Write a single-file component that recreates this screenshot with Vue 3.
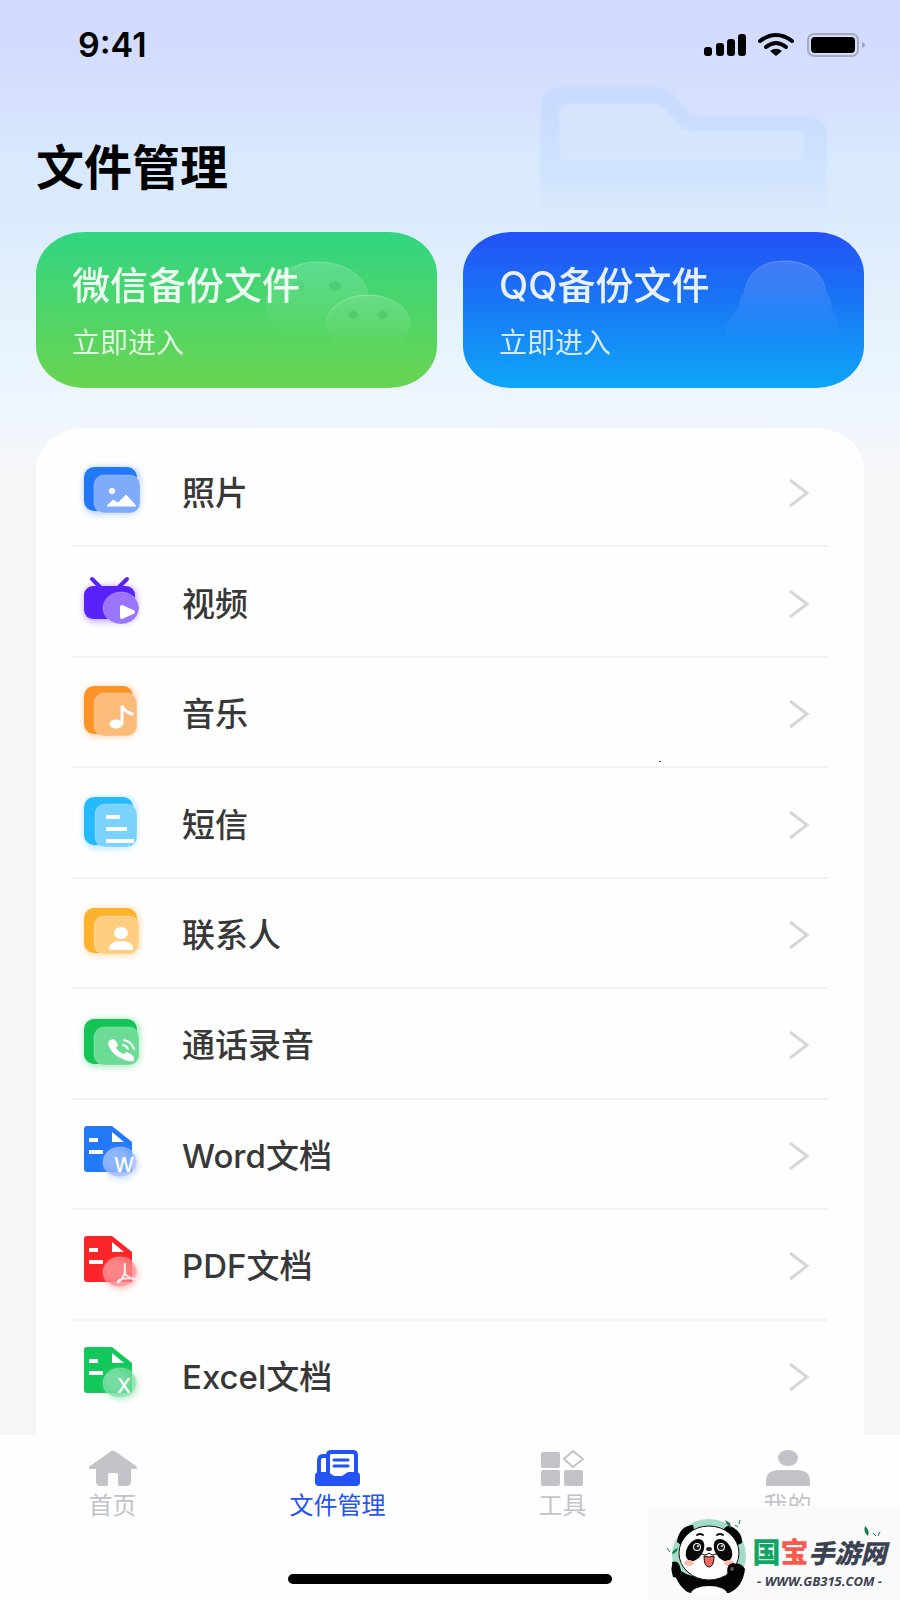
<script setup>
import { ref } from 'vue'

const files = [
  { id: 'photo', name: '照片', color: '#2279f8', front: '#7eabfa' },
  { id: 'video', name: '视频', color: '#5a22fb', front: '#9a74fb' },
  { id: 'music', name: '音乐', color: '#fb9327', front: '#fdbb7a' },
  { id: 'sms', name: '短信', color: '#25b9fd', front: '#7ad3fd' },
  { id: 'contact', name: '联系人', color: '#fdb22b', front: '#fdcd80' },
  { id: 'record', name: '通话录音', color: '#12c556', front: '#6cdb95' },
  { id: 'word', name: 'Word文档', color: '#2279f8', front: '#8fb6fb', letter: 'W' },
  { id: 'pdf', name: 'PDF文档', color: '#fb2429', front: '#fc8588' },
  { id: 'excel', name: 'Excel文档', color: '#12c85a', front: '#74dda0', letter: 'X' }
]

// back and front plates of the folder-like icons: x, y, width, height
const plates = {
  photo: { back: [8, 10, 53, 44], front: [18, 18, 46, 38] },
  music: { back: [8, 8, 49, 48], front: [18, 15, 43, 43] },
  sms: { back: [8, 8, 49, 48], front: [19, 15, 42, 43] },
  contact: { back: [8, 9, 53, 45], front: [18, 17, 45, 38] },
  record: { back: [8, 10, 53, 45], front: [18, 18, 45, 38] }
}

const tabs = [
  { id: 'home', name: '首页' },
  { id: 'files', name: '文件管理' },
  { id: 'tools', name: '工具' },
  { id: 'mine', name: '我的' }
]
const activeTab = ref('files')

const isDoc = (id) => ['word', 'pdf', 'excel'].includes(id)
</script>

<template>
  <div class="page">
    <svg class="folder_bg" viewBox="0 0 300 150" aria-hidden="true">
      <defs>
        <linearGradient id="folderFade" x1="0" y1="0" x2="0" y2="1">
          <stop offset="0" stop-color="#c8dafe" />
          <stop offset="0.6" stop-color="#cbe0fe" stop-opacity="0.7" />
          <stop offset="1" stop-color="#d8eafd" stop-opacity="0" />
        </linearGradient>
        <filter id="soft" x="-10%" y="-10%" width="120%" height="120%"><feGaussianBlur stdDeviation="1.5" /></filter>
      </defs>
      <path fill="url(#folderFade)" filter="url(#soft)" d="M0 150V28Q0 5 26 5H114Q128 5 138 17L150 30Q153 34 162 34H264Q287 34 287 54V150Z" />
      <path fill="#d8e7ff" filter="url(#soft)" opacity=".85" d="M20 78V28Q20 22 28 22H112Q122 22 128 31L137 42Q142 49 156 49H258Q264 49 264 55V78Z" />
    </svg>

    <header class="status">
      <span class="time">9:41</span>
      <svg class="status_icons" viewBox="0 0 162 26" aria-hidden="true">
        <rect x="0" y="15" width="8" height="9" rx="3" />
        <rect x="12" y="11" width="8" height="13" rx="3" />
        <rect x="23" y="7" width="8" height="17" rx="3" />
        <rect x="34" y="2" width="8" height="22" rx="3" />
        <path fill="none" stroke="#000" stroke-width="4" stroke-linecap="round" d="M56 9Q72 -3 88 9" />
        <path fill="none" stroke="#000" stroke-width="4" stroke-linecap="round" d="M62 15Q72 7 82 15" />
        <path d="M66 19Q72 14.500 78 19L72 24Z" />
        <rect x="104" y="2" width="50" height="22" rx="6" fill="#d5dcf4" stroke="#a3aac4" stroke-width="2" />
        <rect x="107" y="5" width="44" height="16" rx="4" />
        <path fill="#9fa7bf" d="M158 10Q161 11 161 13Q161 15 158 16Z" />
      </svg>
    </header>

    <h1 class="title">文件管理</h1>

    <section class="backups">
      <button class="backup wechat" type="button">
        <svg class="backup_art" viewBox="0 0 401 156" preserveAspectRatio="xMaxYMid meet" aria-hidden="true">
          <defs>
            <linearGradient id="artFade" x1="0" y1="0" x2="0" y2="1">
              <stop offset="0" stop-color="#fff" stop-opacity="0.17" />
              <stop offset="0.9" stop-color="#fff" stop-opacity="0" />
            </linearGradient>
            <linearGradient id="lineFade" x1="0" y1="0" x2="0" y2="1">
              <stop offset="0" stop-color="#fff" stop-opacity="0.25" />
              <stop offset="0.6" stop-color="#fff" stop-opacity="0" />
            </linearGradient>
          </defs>
          <path fill="url(#artFade)" stroke="url(#lineFade)" d="M281 30C310 30 329 44 332 63C309 65 292 74 290 94C288 105 292 110 296 113C258 121 230 100 230 73C230 49 253 30 281 30Z" />
          <ellipse cx="299" cy="54" rx="6" ry="5" fill="#34b863" opacity=".35" />
          <ellipse cx="263" cy="54" rx="6" ry="5" fill="#34b863" opacity=".2" />
          <ellipse cx="332" cy="92" rx="42" ry="29" fill="url(#artFade)" stroke="url(#lineFade)" />
          <ellipse cx="317" cy="83" rx="5" ry="4" fill="#3fba57" opacity=".4" />
          <ellipse cx="347" cy="83" rx="5" ry="4" fill="#3fba57" opacity=".4" />
        </svg>
        <span class="backup_name">微信备份文件</span>
        <span class="backup_go">立即进入</span>
      </button>
      <button class="backup qq" type="button">
        <svg class="backup_art" viewBox="0 0 401 156" preserveAspectRatio="xMaxYMid meet" aria-hidden="true">
          <path fill="url(#artFade)" stroke="url(#lineFade)" d="M322 29C348 29 362 44 363 62Q369 68 368 77Q377 89 377 99Q375 108 370 102C366 124 278 124 273 102Q264 110 262 99Q264 87 276 76Q276 68 281 62C284 42 297 29 322 29Z" />
        </svg>
        <span class="backup_name">QQ备份文件</span>
        <span class="backup_go">立即进入</span>
      </button>
    </section>

    <ul class="list">
      <li v-for="file in files" :key="file.id" class="row">
        <a class="row_link" href="#">
          <svg class="row_icon" viewBox="0 0 72 72" aria-hidden="true">
            <defs>
              <filter id="glow" x="-30%" y="-30%" width="160%" height="160%"><feGaussianBlur stdDeviation="3" /></filter>
              <radialGradient :id="'circle-' + file.id" cx=".35" cy=".4" r=".75">
                <stop offset="0.3" :stop-color="file.front" />
                <stop offset="1" :stop-color="file.front" stop-opacity="0.35" />
              </radialGradient>
            </defs>

            <template v-if="plates[file.id]">
              <rect :x="plates[file.id].back[0]" :y="plates[file.id].back[1]" :width="plates[file.id].back[2] + 3" :height="plates[file.id].back[3] + 3" rx="12" :fill="file.front" opacity=".6" filter="url(#glow)" />
              <rect :x="plates[file.id].back[0]" :y="plates[file.id].back[1]" :width="plates[file.id].back[2]" :height="plates[file.id].back[3]" rx="10" :fill="file.color" />
              <rect :x="plates[file.id].front[0]" :y="plates[file.id].front[1]" :width="plates[file.id].front[2]" :height="plates[file.id].front[3]" rx="10" :fill="file.front" stroke="#fff" stroke-opacity=".25" />
            </template>

            <g v-if="file.id === 'photo'" fill="#fff">
              <circle cx="36" cy="34" r="3" />
              <path d="M31 49L37 43L42 46L50 38L60 49Z" stroke="#fff" stroke-linejoin="round" />
            </g>

            <g v-else-if="file.id === 'video'">
              <rect x="8" y="18" width="53" height="36" rx="10" :fill="file.front" opacity=".6" filter="url(#glow)" />
              <path d="M16 11L24 19M51 11L43 19" :stroke="file.color" stroke-width="4" stroke-linecap="round" />
              <rect x="8" y="18" width="51" height="33" rx="9" :fill="file.color" />
              <ellipse cx="45" cy="40" rx="18" ry="16" :fill="file.front" stroke="#fff" stroke-opacity=".25" />
              <path d="M46 39L57 44L46 49Z" fill="#fff" stroke="#fff" stroke-width="4" stroke-linejoin="round" />
            </g>

            <g v-else-if="file.id === 'music'" fill="none" stroke="#fff" stroke-width="3" stroke-linecap="round">
              <path d="M46 46V28Q49 34 56 36" />
              <ellipse cx="40" cy="46" rx="5" ry="3" fill="#fff" />
            </g>

            <path v-else-if="file.id === 'sms'" d="M30 28H44M30 40H51M30 52H58" stroke="#fff" stroke-width="4" />

            <g v-else-if="file.id === 'contact'" fill="#fff">
              <ellipse cx="45" cy="34" rx="7" ry="6" />
              <path d="M33 51V49Q34 42 45 42Q56 42 57 49V51Z" />
            </g>

            <g v-else-if="file.id === 'record'" fill="#fff">
              <path d="M34 31L38 30Q41 33 42 36L40 39Q43 43 47 45L51 43Q56 45 58 48L58 52Q54 53 49 51Q35 46 32 35Q32 32 34 31Z" />
              <path d="M47 36Q51 37 52 40M48 31Q56 33 58 40" fill="none" stroke="#fff" stroke-width="2" stroke-linecap="round" />
            </g>

            <g v-else-if="isDoc(file.id)">
              <path d="M11 6H36L56 22V52H11Q8 52 8 49V9Q8 6 11 6Z" :fill="file.color" />
              <path d="M36 12L48 22H36Z" fill="#fff" />
              <path d="M13 20H22M13 32H27" stroke="#fff" stroke-width="4" />
              <ellipse cx="45" cy="44" rx="17" ry="15" :fill="file.front" opacity=".5" filter="url(#glow)" />
              <ellipse cx="44" cy="42" rx="17" ry="15" :fill="'url(#circle-' + file.id + ')'" stroke="#fff" stroke-opacity=".25" />
              <text v-if="file.letter" class="icon_letter" x="48" y="52" text-anchor="middle">{{ file.letter }}</text>
              <path v-else d="M49 34Q48 42 50 45Q55 49 60 49M49 38Q50 44 44 51Q41 54 42 51Q47 47 60 49" fill="none" stroke="#fff" stroke-width="2" stroke-linecap="round" opacity=".85" />
            </g>
          </svg>
          <span class="row_name">{{ file.name }}</span>
          <svg class="row_arrow" viewBox="0 0 22 30" aria-hidden="true">
            <path d="M2 2L19 15L2 28" />
          </svg>
        </a>
      </li>
    </ul>

    <nav class="tabbar">
      <div class="tabs">
        <a
          v-for="tab in tabs"
          :key="tab.id"
          href="#"
          :class="activeTab === tab.id ? 'tab tab_active' : 'tab'"
          @click.prevent="activeTab = tab.id"
        >
          <svg class="tab_icon" viewBox="0 0 48 40" aria-hidden="true">
            <path v-if="tab.id === 'home'" d="M21 4Q24 1 27 4L47 18Q50 21 46 21H42V34Q42 38 37 38H30Q29 38 29 36V27Q29 25 27 25H21Q19 25 19 27V36Q19 38 18 38H12Q7 38 7 34V21H2Q-2 21 1 18Z" />
            <g v-else-if="tab.id === 'files'">
              <path fill="none" stroke="currentColor" stroke-width="4" d="M14 26V7Q14 4 17 4H39Q42 4 42 7V26M13 8H9Q5 8 5 13V26" />
              <path d="M5 24H14L20 28H28L34 24H42Q46 24 46 28V34Q46 38 42 38H5Q1 38 1 34V28Q1 24 5 24Z" />
              <path fill="none" stroke="currentColor" stroke-width="3" stroke-linecap="round" d="M20 12H34M20 18H34" />
            </g>
            <g v-else-if="tab.id === 'tools'">
              <rect x="2" y="4" width="19" height="16" rx="2" />
              <rect x="2" y="22" width="19" height="16" rx="2" />
              <rect x="25" y="22" width="19" height="16" rx="2" />
              <path fill="none" stroke="currentColor" stroke-width="2" stroke-linejoin="round" d="M34 3L44 11L34 19L25 11Z" />
            </g>
            <g v-else>
              <ellipse cx="24" cy="10" rx="10" ry="8" />
              <path d="M2 38V32Q3 22 15 22H33Q45 22 46 32V38Z" />
            </g>
          </svg>
          <span class="tab_name">{{ tab.name }}</span>
        </a>
      </div>
      <div class="indicator"></div>
    </nav>

    <span class="speck"></span>

    <aside class="brand">
      <svg class="brand_panda" viewBox="0 0 84 80" aria-hidden="true">
        <defs>
          <clipPath id="pandaClip"><path d="M0 0H84V66Q78 74 66 76H24Q12 74 4 66Z" /></clipPath>
        </defs>
        <circle cx="42" cy="39" r="37" fill="#a5dcc6" />
        <g clip-path="url(#pandaClip)">
          <path d="M5 45Q12 42 14 54Q26 62 42 60Q58 62 62 56Q58 46 67 46Q75 46 78 52Q76 70 62 76H22Q8 68 5 45Z" fill="#050505" />
          <ellipse cx="42" cy="77" rx="18" ry="8" fill="#fff" />
        </g>
        <path d="M10 25Q12 9 26 8L28 16L14 28Z" fill="#050505" />
        <path d="M56 14Q59 6 67 11Q76 17 75 26L69 29Z" fill="#050505" />
        <ellipse cx="42" cy="36" rx="30" ry="27" fill="#fff" stroke="#111" stroke-width="1" />
        <ellipse cx="28" cy="33" rx="8" ry="12" transform="rotate(32 28 33)" fill="#080808" />
        <ellipse cx="56" cy="33" rx="8" ry="12" transform="rotate(-32 56 33)" fill="#080808" />
        <circle cx="30" cy="30" r="4" fill="#fff" />
        <circle cx="54" cy="30" r="4" fill="#fff" />
        <circle cx="30" cy="30" r="3" fill="#221c1c" />
        <circle cx="54" cy="30" r="3" fill="#221c1c" />
        <circle cx="31" cy="29" r="1" fill="#fff" />
        <circle cx="55" cy="29" r="1" fill="#fff" />
        <path d="M30 18Q33 16 36 18M50 18Q53 16 56 18" fill="none" stroke="#111" stroke-width="2" stroke-linecap="round" />
        <ellipse cx="42" cy="32" rx="3" ry="2" fill="#3a2020" />
        <path d="M34 36Q38 40 42 36Q46 40 50 36" fill="none" stroke="#111" stroke-width="1" />
        <path d="M37 39Q42 41 47 39Q47 50 42 50Q37 50 37 39Z" fill="#f0685e" stroke="#111" stroke-width="1" />
        <ellipse cx="22" cy="46" rx="5" ry="3" fill="#fbbcab" />
        <ellipse cx="62" cy="46" rx="5" ry="3" fill="#fbbcab" />
        <path d="M6 60Q3 50 6 46Q12 43 13 51L16 62ZM61 60Q58 47 66 46Q76 47 76 56L66 66Z" fill="#050505" />
        <circle cx="65" cy="52" r="2" fill="#5d5050" />
        <path d="M58 3L63 6L64 11Q59 8 58 3ZM5 37Q5 33 11 31Q10 36 5 37Z" fill="#187b50" />
        <path d="M68 8L71 10M72 7L73 3M0 31L3 35" stroke="#187b50" />
      </svg>
      <div class="brand_text">
        <p class="brand_name"><span class="brand_big brand_green">国</span><span class="brand_big brand_red">宝</span>手游网</p>
        <p class="brand_url">- WWW.GB315.COM -</p>
      </div>
      <svg class="brand_leaf" viewBox="0 0 20 16" aria-hidden="true">
        <path d="M3 2Q8 6 6 12Q1 8 3 2Z" fill="#187b50" />
        <path d="M11 9L14 12M16 12L18 8" stroke="#187b50" />
      </svg>
    </aside>
  </div>
</template>

<style>
body {
  background: #f6f6f6;
}
</style>

<style scoped>
.page {
  position: relative;
  display: flex;
  flex-direction: column;
  min-height: 100vh;
  overflow: hidden;
  color: #000;
  font-family: Inter, "Noto Sans CJK SC", sans-serif;
  background: linear-gradient(#d2d9fe 0, #d5e1fe 110px, #d8e8fe 150px, #dcebfc 220px, #e6f3fd 330px, #f0f6fe 420px, #f6f6f6 480px);
}

.folder_bg {
  position: absolute;
  top: 82px;
  right: 60px;
  width: 300px;
  height: 150px;
}

.status {
  display: flex;
  align-items: center;
  justify-content: space-between;
  height: 90px;
  padding: 0 34px 0 78px;
}

.time {
  font-size: 34px;
  font-weight: 600;
  line-height: 40px;
}

.status_icons {
  width: 162px;
  height: 26px;
}

.title {
  position: relative;
  margin: 48px 36px 0;
  font-size: 48px;
  font-weight: 700;
  line-height: 60px;
}

.backups {
  position: relative;
  display: grid;
  grid-template-columns: 1fr 1fr;
  gap: 26px;
  margin: 34px 36px 0;
}

.backup {
  position: relative;
  display: flex;
  flex-direction: column;
  align-items: flex-start;
  gap: 16px;
  height: 156px;
  padding: 29px 36px;
  border: 0;
  border-radius: 48px / 42px;
  color: #fff;
  font-family: inherit;
  text-align: left;
}

.wechat {
  background: linear-gradient(#32d583, #69d550);
}

.qq {
  background: linear-gradient(#2350f5, #0ea6f6);
}

.backup_art {
  position: absolute;
  inset: 0;
  width: 100%;
  height: 100%;
}

.backup_name {
  position: relative;
  font-size: 38px;
  font-weight: 500;
  line-height: 48px;
  opacity: .9;
}

.backup_go {
  position: relative;
  font-size: 28px;
  line-height: 36px;
  opacity: .82;
}

.list {
  position: relative;
  display: flex;
  flex: 1;
  flex-direction: column;
  margin: 40px 36px 0;
  padding: 9px 36px 4px;
  border-radius: 48px 48px 0 0 / 42px 42px 0 0;
  list-style: none;
  background: #fefefe;
}

.row {
  display: flex;
  flex: 1;
  border-bottom: 2px solid #f2f2f2;
}

.row:last-child {
  border-bottom-color: transparent;
}

.row_link {
  display: flex;
  flex: 1;
  align-items: center;
  padding: 4px 18px 0 4px;
  color: #383838;
  text-decoration: none;
}

.row_icon {
  width: 72px;
  height: 72px;
}

.icon_letter {
  fill: #fff;
  font-size: 20px;
  font-weight: 500;
}

.row_name {
  flex: 1;
  margin-left: 34px;
  font-size: 33px;
  font-weight: 500;
  line-height: 48px;
}

.row_arrow {
  width: 22px;
  height: 30px;
  fill: none;
  stroke: #d6d6d6;
  stroke-width: 3px;
}

.tabbar {
  position: relative;
  padding: 13px 0 16px;
  background: #fefefe;
}

.tabs {
  display: grid;
  grid-template-columns: repeat(4, 1fr);
}

.tab {
  display: flex;
  flex-direction: column;
  align-items: center;
  gap: 4px;
  color: #c1c3c9;
  text-decoration: none;
}

.tab_active {
  color: #2353f5;
}

.tab_icon {
  width: 48px;
  height: 40px;
  fill: currentColor;
}

.tab_name {
  font-size: 24px;
  line-height: 28px;
}

.indicator {
  width: 36%;
  height: 10px;
  margin: 54px auto 0;
  border-radius: 5px;
  background: #000;
}

.speck {
  position: absolute;
  top: 761px;
  right: 239px;
  width: 2px;
  height: 1px;
  background: #444;
}

.brand {
  position: absolute;
  right: 0;
  bottom: 0;
  display: flex;
  align-items: center;
  box-sizing: border-box;
  width: 252px;
  height: 94px;
  padding: 0 12px 0 19px;
  background: #fafafa;
}

.brand_panda {
  flex: none;
  width: 84px;
  height: 80px;
  margin-top: 8px;
}

.brand_text {
  flex: 1;
  padding-top: 18px;
  color: #3b4252;
  text-align: center;
  white-space: nowrap;
}

.brand_name {
  margin: 0;
  font-size: 26px;
  font-style: italic;
  font-weight: 900;
  line-height: 36px;
}

.brand_big {
  font-size: 28px;
  font-style: normal;
}

.brand_green {
  color: #0fa563;
}

.brand_red {
  color: #f8594e;
}

.brand_url {
  margin: 0;
  font-family: "Open Sans", sans-serif;
  font-size: 13px;
  font-style: italic;
  font-weight: 700;
  line-height: 18px;
}

.brand_leaf {
  position: absolute;
  top: 18px;
  right: 18px;
  width: 20px;
  height: 16px;
}
</style>
